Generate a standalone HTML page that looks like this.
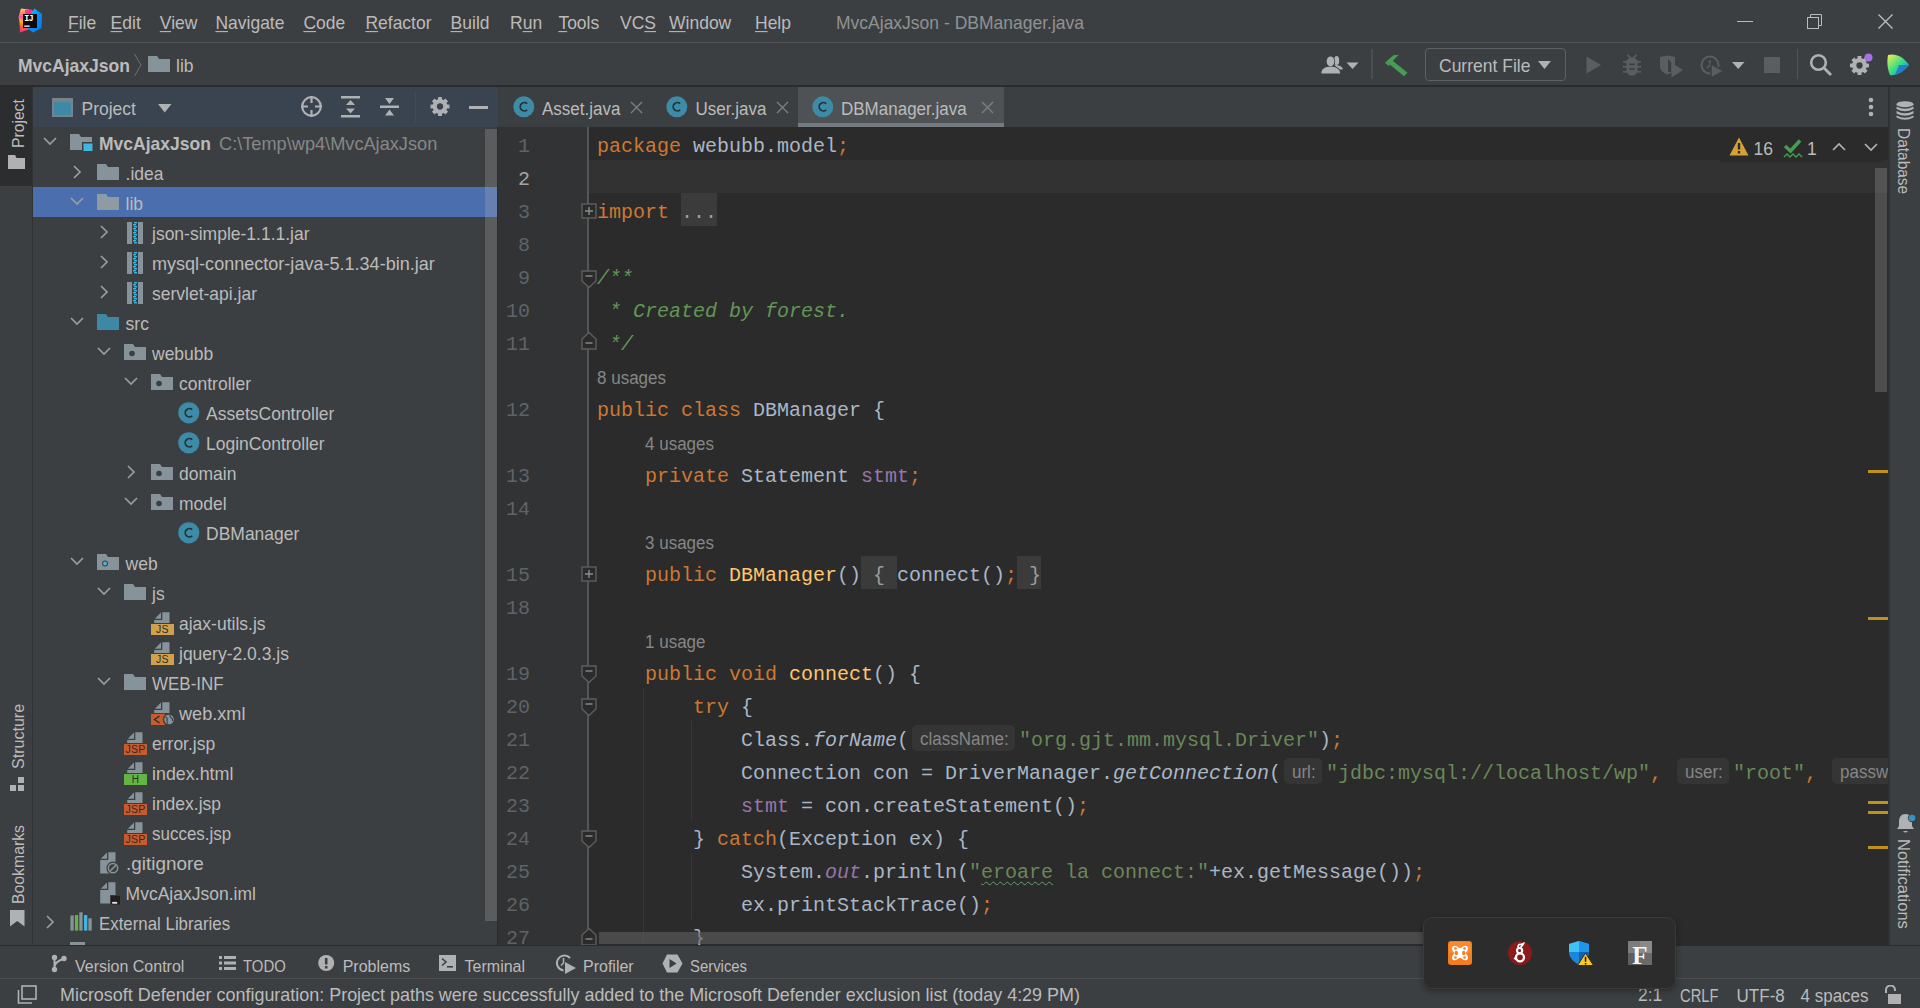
<!DOCTYPE html>
<html><head><meta charset="utf-8"><title>IntelliJ</title>
<style>
html,body{margin:0;padding:0;width:1920px;height:1008px;overflow:hidden;background:#3C3F41;}
div,svg{position:absolute;}
.t{white-space:pre;}
u{text-decoration:underline;text-underline-offset:2px;text-decoration-thickness:1px;}
</style></head><body>
<div style="left:0px;top:0px;width:1920px;height:1008px;background:#3C3F41;"></div>
<div style="left:0px;top:42px;width:1920px;height:1px;background:#505355;"></div>
<div style="left:0px;top:85px;width:1920px;height:2px;background:#2B2B2B;"></div>
<svg style="left:16px;top:8px;" width="28" height="27" viewBox="0 0 28 27">
<defs><linearGradient id="lgL" x1="0" y1="0" x2="0" y2="1"><stop offset="0" stop-color="#FCD33A"/><stop offset="0.35" stop-color="#FF4FB0"/><stop offset="0.55" stop-color="#FFB800"/><stop offset="0.75" stop-color="#FF5A36"/><stop offset="1" stop-color="#FF2E8E"/></linearGradient>
<linearGradient id="lgR" x1="0" y1="0" x2="1" y2="1"><stop offset="0" stop-color="#00D8FF"/><stop offset="0.5" stop-color="#0A8CF5"/><stop offset="1" stop-color="#087CFA"/></linearGradient></defs>
<polygon points="2.5,9 5,0.5 13,1.5 14,21 4,24.5 3.5,14" fill="url(#lgL)"/>
<polygon points="9,2 16,1.5 18,6 9,6" fill="#FF318C"/>
<polygon points="16,4 18.5,0.5 26,6 25.5,20 17,24.5 11,20" fill="url(#lgR)"/>
<rect x="7" y="6" width="14" height="14" fill="#0C0A0A"/>
<text x="8.2" y="13.3" font-family="Liberation Mono" font-weight="700" font-size="8.5" fill="#fff" letter-spacing="-0.8">IJ</text>
<rect x="8.2" y="17.5" width="5.5" height="1.3" fill="#fff"/>
</svg>
<div class="t" style="left:68px;top:15.39px;font-size:17.5px;line-height:17.5px;height:17.5px;color:#BBBBBB;font-family:'Liberation Sans', sans-serif;transform:scale(1.0,1.06);transform-origin:0 14.81px;"><u>F</u>ile</div>
<div class="t" style="left:110.6px;top:15.39px;font-size:17.5px;line-height:17.5px;height:17.5px;color:#BBBBBB;font-family:'Liberation Sans', sans-serif;transform:scale(1.0,1.06);transform-origin:0 14.81px;"><u>E</u>dit</div>
<div class="t" style="left:159.8px;top:15.39px;font-size:17.5px;line-height:17.5px;height:17.5px;color:#BBBBBB;font-family:'Liberation Sans', sans-serif;transform:scale(1.0,1.06);transform-origin:0 14.81px;"><u>V</u>iew</div>
<div class="t" style="left:215.4px;top:15.39px;font-size:17.5px;line-height:17.5px;height:17.5px;color:#BBBBBB;font-family:'Liberation Sans', sans-serif;transform:scale(1.0,1.06);transform-origin:0 14.81px;"><u>N</u>avigate</div>
<div class="t" style="left:303.4px;top:15.39px;font-size:17.5px;line-height:17.5px;height:17.5px;color:#BBBBBB;font-family:'Liberation Sans', sans-serif;transform:scale(1.0,1.06);transform-origin:0 14.81px;"><u>C</u>ode</div>
<div class="t" style="left:365.4px;top:15.39px;font-size:17.5px;line-height:17.5px;height:17.5px;color:#BBBBBB;font-family:'Liberation Sans', sans-serif;transform:scale(1.0,1.06);transform-origin:0 14.81px;"><u>R</u>efactor</div>
<div class="t" style="left:450.6px;top:15.39px;font-size:17.5px;line-height:17.5px;height:17.5px;color:#BBBBBB;font-family:'Liberation Sans', sans-serif;transform:scale(1.0,1.06);transform-origin:0 14.81px;"><u>B</u>uild</div>
<div class="t" style="left:510px;top:15.39px;font-size:17.5px;line-height:17.5px;height:17.5px;color:#BBBBBB;font-family:'Liberation Sans', sans-serif;transform:scale(1.0,1.06);transform-origin:0 14.81px;">R<u>u</u>n</div>
<div class="t" style="left:558.4px;top:15.39px;font-size:17.5px;line-height:17.5px;height:17.5px;color:#BBBBBB;font-family:'Liberation Sans', sans-serif;transform:scale(1.0,1.06);transform-origin:0 14.81px;"><u>T</u>ools</div>
<div class="t" style="left:620px;top:15.39px;font-size:17.5px;line-height:17.5px;height:17.5px;color:#BBBBBB;font-family:'Liberation Sans', sans-serif;transform:scale(1.0,1.06);transform-origin:0 14.81px;">VC<u>S</u></div>
<div class="t" style="left:669px;top:15.39px;font-size:17.5px;line-height:17.5px;height:17.5px;color:#BBBBBB;font-family:'Liberation Sans', sans-serif;transform:scale(1.0,1.06);transform-origin:0 14.81px;"><u>W</u>indow</div>
<div class="t" style="left:755px;top:15.39px;font-size:17.5px;line-height:17.5px;height:17.5px;color:#BBBBBB;font-family:'Liberation Sans', sans-serif;transform:scale(1.0,1.06);transform-origin:0 14.81px;"><u>H</u>elp</div>
<div class="t" style="left:836px;top:15.39px;font-size:17.5px;line-height:17.5px;height:17.5px;color:#8F9293;font-family:'Liberation Sans', sans-serif;transform:scale(1.0,1.06);transform-origin:0 14.81px;">MvcAjaxJson - DBManager.java</div>
<div style="left:1737px;top:21px;width:16px;height:1px;background:#BBBBBB;"></div>
<svg style="left:1806px;top:13px;" width="18" height="16" viewBox="0 0 18 16"><rect x="1.5" y="4.5" width="11" height="11" fill="none" stroke="#BBBBBB"/><path d="M4.5 4.5 V1.5 H15.5 V12.5 H12.5" fill="none" stroke="#BBBBBB"/></svg>
<svg style="left:1877px;top:13px;" width="17" height="17" viewBox="0 0 17 17"><path d="M1.5 1.5 L15.5 15.5 M15.5 1.5 L1.5 15.5" stroke="#BBBBBB" stroke-width="1.4"/></svg>
<div class="t" style="left:18px;top:58.09px;font-size:17.5px;line-height:17.5px;height:17.5px;color:#BBBBBB;font-family:'Liberation Sans', sans-serif;transform:scale(1.0,1.06);transform-origin:0 14.81px;font-weight:700;">MvcAjaxJson</div>
<svg style="left:133px;top:53px;" width="10" height="24" viewBox="0 0 10 24"><path d="M1.5 1 L8 12 L1.5 23" fill="none" stroke="#6E7173" stroke-width="1"/></svg>
<svg style="left:148px;top:56px;" width="23" height="17" viewBox="0 0 23 17"><path d="M0 0 H9.2 L11.0 3 H22 V16 H0 Z" fill="#87939A" transform="translate(0,0)"/></svg>
<div class="t" style="left:176px;top:58.09px;font-size:17.5px;line-height:17.5px;height:17.5px;color:#BBBBBB;font-family:'Liberation Sans', sans-serif;transform:scale(1.0,1.06);transform-origin:0 14.81px;">lib</div>
<svg style="left:1320px;top:55px;" width="24" height="20" viewBox="0 0 24 20"><ellipse cx="16.6" cy="5.5" rx="2.6" ry="4.6" fill="#AFB1B3"/><path d="M14 9.5 C19.5 10.5 22.5 11.5 22.8 14.2 L19 14.8 Z" fill="#AFB1B3"/><ellipse cx="10.5" cy="6.5" rx="4.6" ry="5.6" fill="#3C3F41"/><path d="M0.3 19 C0.5 13 4 11 10.5 11 C17 11 20.5 13 21.3 19 Z" fill="#3C3F41"/><ellipse cx="10.5" cy="6.4" rx="3.8" ry="5" fill="#AFB1B3"/><path d="M1.3 18.5 C1.5 13.5 5 11.8 10.5 11.8 C16 11.8 19.5 13.5 20.3 18.5 Z" fill="#AFB1B3"/></svg>
<svg style="left:1346px;top:62px;" width="14" height="8" viewBox="0 0 14 8"><path d="M0.5 0.5 H12.5 L6.5 7 Z" fill="#AFB1B3"/></svg>
<div style="left:1371px;top:49px;width:2px;height:30px;background:#4B4E50;"></div>
<svg style="left:1384px;top:53px;" width="25" height="24" viewBox="0 0 25 24"><path d="M1 9.7 L9.3 2.2 L14.8 1.8 L10.8 5.8 L8.5 8.2 L4.6 13 Z" fill="#499C54"/><path d="M7.5 6.8 L23.5 19.8 L20 23.2 L4.5 10.5 Z" fill="#499C54"/></svg>
<div style="left:1425px;top:48px;width:139px;height:31px;border:1px solid #5E6163;border-radius:4px;"></div>
<div class="t" style="left:1439px;top:58.29px;font-size:17.5px;line-height:17.5px;height:17.5px;color:#BBBBBB;font-family:'Liberation Sans', sans-serif;transform:scale(1.0,1.06);transform-origin:0 14.81px;">Current File</div>
<svg style="left:1538px;top:61px;" width="14" height="8" viewBox="0 0 14 8"><path d="M0 0 H13 L6.5 8 Z" fill="#AFB1B3"/></svg>
<svg style="left:1586px;top:56px;" width="16" height="18" viewBox="0 0 16 18"><path d="M0.5 0.5 L15 9 L0.5 17.5 Z" fill="#5B5E60"/></svg>
<svg style="left:1622px;top:54px;" width="21" height="23" viewBox="0 0 21 23"><g fill="#5B5E60"><path d="M5.5 1 L9.8 4.8 M14.5 1 L10.2 4.8" stroke="#5B5E60" stroke-width="1.8"/><path d="M4.5 8 C4.5 5 7 4 10 4 C13 4 15.5 5 15.5 8 V16 C15.5 19.5 13 21.7 10 21.7 C7 21.7 4.5 19.5 4.5 16 Z"/><rect x="1" y="7.1" width="18" height="1.6"/><rect x="1" y="12" width="18" height="1.6"/><rect x="1" y="17" width="18" height="1.6"/></g><rect x="7.3" y="9.6" width="5.4" height="1.5" fill="#3C3F41"/><rect x="7.3" y="14.2" width="5.4" height="1.5" fill="#3C3F41"/></svg>
<svg style="left:1659px;top:55px;" width="25" height="23" viewBox="0 0 25 23"><path d="M1 2 L8.5 0.5 L16 2 V11 C16 15.5 12.5 18 8.5 19.5 C4.5 18 1 15.5 1 11 Z" fill="#5B5E60"/><path d="M9 4 H12.5 V17 H9 Z" fill="#3C3F41"/><path d="M9 4 H16 V7.5 H12.5 Z" fill="#5B5E60"/><path d="M12.5 8 L24 15 L12.5 22.5 Z" fill="#5B5E60"/></svg>
<svg style="left:1700px;top:55px;" width="25" height="23" viewBox="0 0 25 23"><circle cx="10" cy="10" r="8.5" fill="none" stroke="#5B5E60" stroke-width="2"/><path d="M10 5 V10 L7 13" stroke="#5B5E60" stroke-width="1.6" fill="none"/><path d="M11 9 L24 16 L11 23 Z" fill="#5B5E60" stroke="#3C3F41" stroke-width="1.5"/></svg>
<svg style="left:1732px;top:62px;" width="13" height="7" viewBox="0 0 13 7"><path d="M0 0 H12.5 L6.25 7 Z" fill="#AFB1B3"/></svg>
<div style="left:1764px;top:57px;width:16px;height:16px;background:#5B5E60;"></div>
<div style="left:1797px;top:49px;width:1px;height:30px;background:#515456;"></div>
<svg style="left:1809px;top:53px;" width="25" height="24" viewBox="0 0 25 24"><circle cx="9.5" cy="9.5" r="7.3" fill="none" stroke="#AFB1B3" stroke-width="2.6"/><path d="M14.5 14.5 L22 22" stroke="#AFB1B3" stroke-width="2.8"/></svg>
<svg style="left:1849px;top:53px;" width="26" height="24" viewBox="0 0 26 24"><circle cx="10.5" cy="12.5" r="7.41" fill="#AFB1B3"/><rect x="8.55" y="3.0" width="3.9000000000000004" height="9.5" fill="#AFB1B3" transform="rotate(0.0 10.5 12.5)"/><rect x="8.55" y="3.0" width="3.9000000000000004" height="9.5" fill="#AFB1B3" transform="rotate(45.0 10.5 12.5)"/><rect x="8.55" y="3.0" width="3.9000000000000004" height="9.5" fill="#AFB1B3" transform="rotate(90.0 10.5 12.5)"/><rect x="8.55" y="3.0" width="3.9000000000000004" height="9.5" fill="#AFB1B3" transform="rotate(135.0 10.5 12.5)"/><rect x="8.55" y="3.0" width="3.9000000000000004" height="9.5" fill="#AFB1B3" transform="rotate(180.0 10.5 12.5)"/><rect x="8.55" y="3.0" width="3.9000000000000004" height="9.5" fill="#AFB1B3" transform="rotate(225.0 10.5 12.5)"/><rect x="8.55" y="3.0" width="3.9000000000000004" height="9.5" fill="#AFB1B3" transform="rotate(270.0 10.5 12.5)"/><rect x="8.55" y="3.0" width="3.9000000000000004" height="9.5" fill="#AFB1B3" transform="rotate(315.0 10.5 12.5)"/><circle cx="10.5" cy="12.5" r="3.1350000000000002" fill="#3C3F41"/><circle cx="19.5" cy="4.5" r="4" fill="#A571E6"/></svg>
<svg style="left:1887px;top:53px;" width="24" height="24" viewBox="0 0 24 24"><defs><linearGradient id="ai1" x1="0" y1="0" x2="1" y2="1"><stop offset="0" stop-color="#F5F24A"/><stop offset="0.5" stop-color="#3DDC84"/><stop offset="1" stop-color="#087CFA"/></linearGradient></defs>
<path d="M1 2 C8 0 16 3 22 12 C16 20 8 23 3 22 C0 15 0 8 1 2 Z" fill="url(#ai1)"/><path d="M12 12 L22 12 C18 17 13 20 8 22 Z" fill="#1D6FD8" opacity="0.8"/></svg>
<div style="left:0px;top:87px;width:32px;height:858px;background:#3C3F41;"></div>
<div style="left:32px;top:87px;width:1px;height:858px;background:#323232;"></div>
<div style="left:0px;top:87px;width:32px;height:99px;background:#2B2D2F;"></div>
<div class="t" style="left:0;top:0;width:50px;height:16px;line-height:16px;font-size:16.5px;color:#BBBBBB;font-family:'Liberation Sans', sans-serif;transform:translate(10px,148px) rotate(-90deg) scaleX(0.95);transform-origin:0 0;">Project</div>
<svg style="left:8px;top:155px;" width="18" height="15" viewBox="0 0 18 15"><path d="M0 0 H7.1 L8.5 3 H17 V14 H0 Z" fill="#AFB1B3" transform="translate(0,0)"/></svg>
<div class="t" style="left:0;top:0;width:65px;height:16px;line-height:16px;font-size:16.5px;color:#BBBBBB;font-family:'Liberation Sans', sans-serif;transform:translate(10px,769px) rotate(-90deg) scaleX(0.972);transform-origin:0 0;">Structure</div>
<svg style="left:10px;top:777px;" width="15" height="14" viewBox="0 0 15 14"><rect x="0" y="8" width="6" height="6" fill="#AFB1B3"/><rect x="8" y="8" width="6" height="6" fill="#AFB1B3"/><rect x="8" y="0" width="6" height="6" fill="#AFB1B3"/></svg>
<div class="t" style="left:0;top:0;width:79px;height:16px;line-height:16px;font-size:16.5px;color:#BBBBBB;font-family:'Liberation Sans', sans-serif;transform:translate(10px,904px) rotate(-90deg) scaleX(0.957);transform-origin:0 0;">Bookmarks</div>
<svg style="left:10px;top:910px;" width="15" height="17" viewBox="0 0 15 17"><path d="M0 0 H14.5 V16.5 L7.25 11 L0 16.5 Z" fill="#AFB1B3"/></svg>
<div style="left:33px;top:87px;width:465px;height:40px;background:#3A4350;"></div>
<svg style="left:51px;top:97px;" width="24" height="22" viewBox="0 0 24 22"><rect x="1" y="1" width="21" height="19" fill="#7A8388"/><rect x="3" y="5" width="17" height="13" fill="#3E88A8"/></svg>
<div class="t" style="left:81.5px;top:100.89px;font-size:17.5px;line-height:17.5px;height:17.5px;color:#BBBBBB;font-family:'Liberation Sans', sans-serif;transform:scale(1.0,1.06);transform-origin:0 14.81px;">Project</div>
<svg style="left:158px;top:104px;" width="14" height="9" viewBox="0 0 14 9"><path d="M0 0 H13.5 L6.75 8.5 Z" fill="#AFB1B3"/></svg>
<svg style="left:300px;top:95px;" width="24" height="24" viewBox="0 0 24 24"><circle cx="11.5" cy="11.5" r="9.3" fill="none" stroke="#AFB1B3" stroke-width="2.2"/><path d="M11.5 1 V8 M11.5 15 V22 M1 11.5 H8 M15 11.5 H22" stroke="#AFB1B3" stroke-width="2.2"/></svg>
<svg style="left:341px;top:96px;" width="20" height="22" viewBox="0 0 20 22"><rect x="0" y="0" width="19" height="2.5" fill="#AFB1B3"/><rect x="0" y="19" width="19" height="2.5" fill="#AFB1B3"/><path d="M9.5 4 L14 9 H5 Z M9.5 17.5 L14 12.5 H5 Z" fill="#AFB1B3"/></svg>
<svg style="left:380px;top:96px;" width="20" height="22" viewBox="0 0 20 22"><rect x="0" y="9.5" width="19" height="2.5" fill="#AFB1B3"/><path d="M9.5 8 L14 2 H5 Z M9.5 13.5 L14 19.5 H5 Z" fill="#AFB1B3"/></svg>
<div style="left:415px;top:91px;width:1px;height:31px;background:#4F4A3F;"></div>
<svg style="left:430px;top:96px;" width="21" height="22" viewBox="0 0 21 22"><circle cx="10" cy="10.5" r="7.41" fill="#AFB1B3"/><rect x="8.05" y="1.0" width="3.9000000000000004" height="9.5" fill="#AFB1B3" transform="rotate(0.0 10 10.5)"/><rect x="8.05" y="1.0" width="3.9000000000000004" height="9.5" fill="#AFB1B3" transform="rotate(45.0 10 10.5)"/><rect x="8.05" y="1.0" width="3.9000000000000004" height="9.5" fill="#AFB1B3" transform="rotate(90.0 10 10.5)"/><rect x="8.05" y="1.0" width="3.9000000000000004" height="9.5" fill="#AFB1B3" transform="rotate(135.0 10 10.5)"/><rect x="8.05" y="1.0" width="3.9000000000000004" height="9.5" fill="#AFB1B3" transform="rotate(180.0 10 10.5)"/><rect x="8.05" y="1.0" width="3.9000000000000004" height="9.5" fill="#AFB1B3" transform="rotate(225.0 10 10.5)"/><rect x="8.05" y="1.0" width="3.9000000000000004" height="9.5" fill="#AFB1B3" transform="rotate(270.0 10 10.5)"/><rect x="8.05" y="1.0" width="3.9000000000000004" height="9.5" fill="#AFB1B3" transform="rotate(315.0 10 10.5)"/><circle cx="10" cy="10.5" r="3.1350000000000002" fill="#3A4350"/></svg>
<div style="left:469px;top:106px;width:19px;height:2.5px;background:#AFB1B3;"></div>
<div style="left:33px;top:127px;width:465px;height:818px;overflow:hidden;">
<div style="left:0px;top:60px;width:465px;height:30px;background:#4B6EAF;"></div>
<svg style="left:10px;top:9px;" width="14" height="10" viewBox="0 0 14 10"><path d="M1 2 L7 8 L13 2" fill="none" stroke="#9A9DA0" stroke-width="1.7"/></svg>
<svg style="left:37px;top:7px;" width="23" height="17" viewBox="0 0 23 17"><path d="M0 0 H9 L11 3 H22 V16 H0 Z" fill="#87939A"/><rect x="12" y="8" width="11" height="9" fill="#3C3F41"/><rect x="13.5" y="9.5" width="9" height="8" fill="#40B6E0"/></svg>
<div class="t" style="left:66px;top:9.19px;font-size:17.5px;line-height:17.5px;height:17.5px;color:#BBBBBB;font-family:'Liberation Sans', sans-serif;transform:scale(1.0,1.06);transform-origin:0 14.81px;font-weight:700;">MvcAjaxJson</div>
<svg style="left:39px;top:38px;" width="10" height="14" viewBox="0 0 10 14"><path d="M2 1 L8 7 L2 13" fill="none" stroke="#9A9DA0" stroke-width="1.7"/></svg>
<svg style="left:64px;top:37px;" width="22" height="17" viewBox="0 0 22 17"><path d="M0 0 H9 L11 3 H22 V16 H0 Z" fill="#87939A"/></svg>
<div class="t" style="left:92.6px;top:39.19px;font-size:17.5px;line-height:17.5px;height:17.5px;color:#BBBBBB;font-family:'Liberation Sans', sans-serif;transform:scale(1.0,1.06);transform-origin:0 14.81px;">.idea</div>
<svg style="left:37px;top:69px;" width="14" height="10" viewBox="0 0 14 10"><path d="M1 2 L7 8 L13 2" fill="none" stroke="#9A9DA0" stroke-width="1.7"/></svg>
<svg style="left:64px;top:67px;" width="22" height="17" viewBox="0 0 22 17"><path d="M0 0 H9 L11 3 H22 V16 H0 Z" fill="#8F9BA2"/></svg>
<div class="t" style="left:92.6px;top:69.19px;font-size:17.5px;line-height:17.5px;height:17.5px;color:#BBBBBB;font-family:'Liberation Sans', sans-serif;transform:scale(1.0,1.06);transform-origin:0 14.81px;">lib</div>
<svg style="left:66px;top:98px;" width="10" height="14" viewBox="0 0 10 14"><path d="M2 1 L8 7 L2 13" fill="none" stroke="#9A9DA0" stroke-width="1.7"/></svg>
<svg style="left:94px;top:95px;" width="16" height="22" viewBox="0 0 16 22"><rect x="0" y="0" width="16" height="22" fill="#87939A"/><rect x="5" y="0" width="6" height="22" fill="#3C3F41"/><rect x="7" y="0" width="3" height="1.4" fill="#40B6E0"/><rect x="6" y="2" width="3" height="1.4" fill="#40B6E0"/><rect x="7" y="4" width="3" height="1.4" fill="#40B6E0"/><rect x="6" y="6" width="3" height="1.4" fill="#40B6E0"/><rect x="7" y="8" width="3" height="1.4" fill="#40B6E0"/><rect x="6" y="10" width="3" height="1.4" fill="#40B6E0"/><rect x="7" y="12" width="3" height="1.4" fill="#40B6E0"/><rect x="6" y="14" width="3" height="1.4" fill="#40B6E0"/><rect x="7" y="16" width="3" height="1.4" fill="#40B6E0"/><rect x="6" y="18" width="3" height="1.4" fill="#40B6E0"/><rect x="7" y="20" width="3" height="1.4" fill="#40B6E0"/></svg>
<div class="t" style="left:119px;top:99.19px;font-size:17.5px;line-height:17.5px;height:17.5px;color:#BBBBBB;font-family:'Liberation Sans', sans-serif;transform:scale(1.0,1.06);transform-origin:0 14.81px;">json-simple-1.1.1.jar</div>
<svg style="left:66px;top:128px;" width="10" height="14" viewBox="0 0 10 14"><path d="M2 1 L8 7 L2 13" fill="none" stroke="#9A9DA0" stroke-width="1.7"/></svg>
<svg style="left:94px;top:125px;" width="16" height="22" viewBox="0 0 16 22"><rect x="0" y="0" width="16" height="22" fill="#87939A"/><rect x="5" y="0" width="6" height="22" fill="#3C3F41"/><rect x="7" y="0" width="3" height="1.4" fill="#40B6E0"/><rect x="6" y="2" width="3" height="1.4" fill="#40B6E0"/><rect x="7" y="4" width="3" height="1.4" fill="#40B6E0"/><rect x="6" y="6" width="3" height="1.4" fill="#40B6E0"/><rect x="7" y="8" width="3" height="1.4" fill="#40B6E0"/><rect x="6" y="10" width="3" height="1.4" fill="#40B6E0"/><rect x="7" y="12" width="3" height="1.4" fill="#40B6E0"/><rect x="6" y="14" width="3" height="1.4" fill="#40B6E0"/><rect x="7" y="16" width="3" height="1.4" fill="#40B6E0"/><rect x="6" y="18" width="3" height="1.4" fill="#40B6E0"/><rect x="7" y="20" width="3" height="1.4" fill="#40B6E0"/></svg>
<div class="t" style="left:119px;top:129.19px;font-size:17.5px;line-height:17.5px;height:17.5px;color:#BBBBBB;font-family:'Liberation Sans', sans-serif;transform:scale(1.031,1.06);transform-origin:0 14.81px;">mysql-connector-java-5.1.34-bin.jar</div>
<svg style="left:66px;top:158px;" width="10" height="14" viewBox="0 0 10 14"><path d="M2 1 L8 7 L2 13" fill="none" stroke="#9A9DA0" stroke-width="1.7"/></svg>
<svg style="left:94px;top:155px;" width="16" height="22" viewBox="0 0 16 22"><rect x="0" y="0" width="16" height="22" fill="#87939A"/><rect x="5" y="0" width="6" height="22" fill="#3C3F41"/><rect x="7" y="0" width="3" height="1.4" fill="#40B6E0"/><rect x="6" y="2" width="3" height="1.4" fill="#40B6E0"/><rect x="7" y="4" width="3" height="1.4" fill="#40B6E0"/><rect x="6" y="6" width="3" height="1.4" fill="#40B6E0"/><rect x="7" y="8" width="3" height="1.4" fill="#40B6E0"/><rect x="6" y="10" width="3" height="1.4" fill="#40B6E0"/><rect x="7" y="12" width="3" height="1.4" fill="#40B6E0"/><rect x="6" y="14" width="3" height="1.4" fill="#40B6E0"/><rect x="7" y="16" width="3" height="1.4" fill="#40B6E0"/><rect x="6" y="18" width="3" height="1.4" fill="#40B6E0"/><rect x="7" y="20" width="3" height="1.4" fill="#40B6E0"/></svg>
<div class="t" style="left:119px;top:159.19px;font-size:17.5px;line-height:17.5px;height:17.5px;color:#BBBBBB;font-family:'Liberation Sans', sans-serif;transform:scale(1.0,1.06);transform-origin:0 14.81px;">servlet-api.jar</div>
<svg style="left:37px;top:189px;" width="14" height="10" viewBox="0 0 14 10"><path d="M1 2 L7 8 L13 2" fill="none" stroke="#9A9DA0" stroke-width="1.7"/></svg>
<svg style="left:64px;top:187px;" width="22" height="17" viewBox="0 0 22 17"><path d="M0 0 H9 L11 3 H22 V16 H0 Z" fill="#3D88A5"/></svg>
<div class="t" style="left:92.6px;top:189.19px;font-size:17.5px;line-height:17.5px;height:17.5px;color:#BBBBBB;font-family:'Liberation Sans', sans-serif;transform:scale(1.0,1.06);transform-origin:0 14.81px;">src</div>
<svg style="left:64px;top:219px;" width="14" height="10" viewBox="0 0 14 10"><path d="M1 2 L7 8 L13 2" fill="none" stroke="#9A9DA0" stroke-width="1.7"/></svg>
<svg style="left:91px;top:217px;" width="22" height="17" viewBox="0 0 22 17"><path d="M0 0 H9 L11 3 H22 V16 H0 Z" fill="#87939A"/><circle cx="8" cy="9.5" r="2.8" fill="#3C3F41"/></svg>
<div class="t" style="left:119px;top:219.19px;font-size:17.5px;line-height:17.5px;height:17.5px;color:#BBBBBB;font-family:'Liberation Sans', sans-serif;transform:scale(1.0,1.06);transform-origin:0 14.81px;">webubb</div>
<svg style="left:91px;top:249px;" width="14" height="10" viewBox="0 0 14 10"><path d="M1 2 L7 8 L13 2" fill="none" stroke="#9A9DA0" stroke-width="1.7"/></svg>
<svg style="left:118px;top:247px;" width="22" height="17" viewBox="0 0 22 17"><path d="M0 0 H9 L11 3 H22 V16 H0 Z" fill="#87939A"/><circle cx="8" cy="9.5" r="2.8" fill="#3C3F41"/></svg>
<div class="t" style="left:146px;top:249.19px;font-size:17.5px;line-height:17.5px;height:17.5px;color:#BBBBBB;font-family:'Liberation Sans', sans-serif;transform:scale(1.0,1.06);transform-origin:0 14.81px;">controller</div>
<svg style="left:145px;top:275px;" width="22" height="22" viewBox="0 0 22 22"><circle cx="10.8" cy="10.8" r="10.6" fill="#3D8BA6"/><path d="M14.2 7.6 A4.2 4.2 0 1 0 14.2 13.9" fill="none" stroke="#233238" stroke-width="1.7"/></svg>
<div class="t" style="left:173px;top:279.19px;font-size:17.5px;line-height:17.5px;height:17.5px;color:#BBBBBB;font-family:'Liberation Sans', sans-serif;transform:scale(1.0,1.06);transform-origin:0 14.81px;">AssetsController</div>
<svg style="left:145px;top:305px;" width="22" height="22" viewBox="0 0 22 22"><circle cx="10.8" cy="10.8" r="10.6" fill="#3D8BA6"/><path d="M14.2 7.6 A4.2 4.2 0 1 0 14.2 13.9" fill="none" stroke="#233238" stroke-width="1.7"/></svg>
<div class="t" style="left:173px;top:309.19px;font-size:17.5px;line-height:17.5px;height:17.5px;color:#BBBBBB;font-family:'Liberation Sans', sans-serif;transform:scale(1.0,1.06);transform-origin:0 14.81px;">LoginController</div>
<svg style="left:93px;top:338px;" width="10" height="14" viewBox="0 0 10 14"><path d="M2 1 L8 7 L2 13" fill="none" stroke="#9A9DA0" stroke-width="1.7"/></svg>
<svg style="left:118px;top:337px;" width="22" height="17" viewBox="0 0 22 17"><path d="M0 0 H9 L11 3 H22 V16 H0 Z" fill="#87939A"/><circle cx="8" cy="9.5" r="2.8" fill="#3C3F41"/></svg>
<div class="t" style="left:146px;top:339.19px;font-size:17.5px;line-height:17.5px;height:17.5px;color:#BBBBBB;font-family:'Liberation Sans', sans-serif;transform:scale(1.0,1.06);transform-origin:0 14.81px;">domain</div>
<svg style="left:91px;top:369px;" width="14" height="10" viewBox="0 0 14 10"><path d="M1 2 L7 8 L13 2" fill="none" stroke="#9A9DA0" stroke-width="1.7"/></svg>
<svg style="left:118px;top:367px;" width="22" height="17" viewBox="0 0 22 17"><path d="M0 0 H9 L11 3 H22 V16 H0 Z" fill="#87939A"/><circle cx="8" cy="9.5" r="2.8" fill="#3C3F41"/></svg>
<div class="t" style="left:146px;top:369.19px;font-size:17.5px;line-height:17.5px;height:17.5px;color:#BBBBBB;font-family:'Liberation Sans', sans-serif;transform:scale(1.0,1.06);transform-origin:0 14.81px;">model</div>
<svg style="left:145px;top:395px;" width="22" height="22" viewBox="0 0 22 22"><circle cx="10.8" cy="10.8" r="10.6" fill="#3D8BA6"/><path d="M14.2 7.6 A4.2 4.2 0 1 0 14.2 13.9" fill="none" stroke="#233238" stroke-width="1.7"/></svg>
<div class="t" style="left:173px;top:399.19px;font-size:17.5px;line-height:17.5px;height:17.5px;color:#BBBBBB;font-family:'Liberation Sans', sans-serif;transform:scale(1.0,1.06);transform-origin:0 14.81px;">DBManager</div>
<svg style="left:37px;top:429px;" width="14" height="10" viewBox="0 0 14 10"><path d="M1 2 L7 8 L13 2" fill="none" stroke="#9A9DA0" stroke-width="1.7"/></svg>
<svg style="left:64px;top:427px;" width="22" height="17" viewBox="0 0 22 17"><path d="M0 0 H9 L11 3 H22 V16 H0 Z" fill="#87939A"/><circle cx="8" cy="9.5" r="3" fill="#3C3F41"/><circle cx="8" cy="9.5" r="2" fill="#40B6E0"/></svg>
<div class="t" style="left:92.6px;top:429.19px;font-size:17.5px;line-height:17.5px;height:17.5px;color:#BBBBBB;font-family:'Liberation Sans', sans-serif;transform:scale(1.0,1.06);transform-origin:0 14.81px;">web</div>
<svg style="left:64px;top:459px;" width="14" height="10" viewBox="0 0 14 10"><path d="M1 2 L7 8 L13 2" fill="none" stroke="#9A9DA0" stroke-width="1.7"/></svg>
<svg style="left:91px;top:457px;" width="22" height="17" viewBox="0 0 22 17"><path d="M0 0 H9 L11 3 H22 V16 H0 Z" fill="#87939A"/></svg>
<div class="t" style="left:119px;top:459.19px;font-size:17.5px;line-height:17.5px;height:17.5px;color:#BBBBBB;font-family:'Liberation Sans', sans-serif;transform:scale(1.0,1.06);transform-origin:0 14.81px;">js</div>
<svg style="left:118px;top:480px;" width="24" height="30" viewBox="0 0 24 30"><path d="M11.3 5.3 H18.5 V15.9 H3.2 V12.9 H11.3 Z" fill="#87939A"/><path d="M3.8 11.7 L10 5.5 V11.7 Z" fill="#87939A"/><rect x="0" y="17" width="23" height="11" fill="#D0A04C"/><text x="11.5" y="26.3" text-anchor="middle" font-family="Liberation Sans" font-size="10.5" fill="#2B2B2B" letter-spacing="0.3">JS</text></svg>
<div class="t" style="left:146px;top:489.19px;font-size:17.5px;line-height:17.5px;height:17.5px;color:#BBBBBB;font-family:'Liberation Sans', sans-serif;transform:scale(1.0,1.06);transform-origin:0 14.81px;">ajax-utils.js</div>
<svg style="left:118px;top:510px;" width="24" height="30" viewBox="0 0 24 30"><path d="M11.3 5.3 H18.5 V15.9 H3.2 V12.9 H11.3 Z" fill="#87939A"/><path d="M3.8 11.7 L10 5.5 V11.7 Z" fill="#87939A"/><rect x="0" y="17" width="23" height="11" fill="#D0A04C"/><text x="11.5" y="26.3" text-anchor="middle" font-family="Liberation Sans" font-size="10.5" fill="#2B2B2B" letter-spacing="0.3">JS</text></svg>
<div class="t" style="left:146px;top:519.19px;font-size:17.5px;line-height:17.5px;height:17.5px;color:#BBBBBB;font-family:'Liberation Sans', sans-serif;transform:scale(1.0,1.06);transform-origin:0 14.81px;">jquery-2.0.3.js</div>
<svg style="left:64px;top:549px;" width="14" height="10" viewBox="0 0 14 10"><path d="M1 2 L7 8 L13 2" fill="none" stroke="#9A9DA0" stroke-width="1.7"/></svg>
<svg style="left:91px;top:547px;" width="22" height="17" viewBox="0 0 22 17"><path d="M0 0 H9 L11 3 H22 V16 H0 Z" fill="#87939A"/></svg>
<div class="t" style="left:119px;top:549.19px;font-size:17.5px;line-height:17.5px;height:17.5px;color:#BBBBBB;font-family:'Liberation Sans', sans-serif;transform:scale(0.97,1.06);transform-origin:0 14.81px;">WEB-INF</div>
<svg style="left:118px;top:570px;" width="25" height="30" viewBox="0 0 25 30"><path d="M11.3 5.3 H18.5 V15.9 H3.2 V12.9 H11.3 Z" fill="#87939A"/><path d="M3.8 11.7 L10 5.5 V11.7 Z" fill="#87939A"/><rect x="0" y="17" width="14" height="11" fill="#C75B2E"/><path d="M8.5 19 L3.5 22.5 L8.5 26" fill="none" stroke="#2B2B2B" stroke-width="1.3"/><circle cx="18" cy="22.5" r="6.2" fill="#3C3F41"/><circle cx="18" cy="22.5" r="4.8" fill="#87939A"/><path d="M14.5 20 Q17 21 16 23.5 Q15.5 25 17 26.5 M19 18 Q18.5 20 20.5 21 Q22 22 21.5 24" fill="none" stroke="#3C3F41" stroke-width="1.1"/></svg>
<div class="t" style="left:146px;top:579.19px;font-size:17.5px;line-height:17.5px;height:17.5px;color:#BBBBBB;font-family:'Liberation Sans', sans-serif;transform:scale(1.035,1.06);transform-origin:0 14.81px;">web.xml</div>
<svg style="left:91px;top:600px;" width="24" height="30" viewBox="0 0 24 30"><path d="M11.3 5.3 H18.5 V15.9 H3.2 V12.9 H11.3 Z" fill="#87939A"/><path d="M3.8 11.7 L10 5.5 V11.7 Z" fill="#87939A"/><rect x="0" y="17" width="23" height="11" fill="#C75B2E"/><text x="11.5" y="26.3" text-anchor="middle" font-family="Liberation Sans" font-size="10.5" fill="#2B2B2B" letter-spacing="0.3">JSP</text></svg>
<div class="t" style="left:119px;top:609.19px;font-size:17.5px;line-height:17.5px;height:17.5px;color:#BBBBBB;font-family:'Liberation Sans', sans-serif;transform:scale(1.0,1.06);transform-origin:0 14.81px;">error.jsp</div>
<svg style="left:91px;top:630px;" width="24" height="30" viewBox="0 0 24 30"><path d="M11.3 5.3 H18.5 V15.9 H3.2 V12.9 H11.3 Z" fill="#87939A"/><path d="M3.8 11.7 L10 5.5 V11.7 Z" fill="#87939A"/><rect x="0" y="17" width="23" height="11" fill="#62B543"/><text x="11.5" y="26.3" text-anchor="middle" font-family="Liberation Sans" font-size="10" fill="#2B2B2B" letter-spacing="0.3">H</text></svg>
<div class="t" style="left:119px;top:639.19px;font-size:17.5px;line-height:17.5px;height:17.5px;color:#BBBBBB;font-family:'Liberation Sans', sans-serif;transform:scale(1.02,1.06);transform-origin:0 14.81px;">index.html</div>
<svg style="left:91px;top:660px;" width="24" height="30" viewBox="0 0 24 30"><path d="M11.3 5.3 H18.5 V15.9 H3.2 V12.9 H11.3 Z" fill="#87939A"/><path d="M3.8 11.7 L10 5.5 V11.7 Z" fill="#87939A"/><rect x="0" y="17" width="23" height="11" fill="#C75B2E"/><text x="11.5" y="26.3" text-anchor="middle" font-family="Liberation Sans" font-size="10.5" fill="#2B2B2B" letter-spacing="0.3">JSP</text></svg>
<div class="t" style="left:119px;top:669.19px;font-size:17.5px;line-height:17.5px;height:17.5px;color:#BBBBBB;font-family:'Liberation Sans', sans-serif;transform:scale(1.0,1.06);transform-origin:0 14.81px;">index.jsp</div>
<svg style="left:91px;top:690px;" width="24" height="30" viewBox="0 0 24 30"><path d="M11.3 5.3 H18.5 V15.9 H3.2 V12.9 H11.3 Z" fill="#87939A"/><path d="M3.8 11.7 L10 5.5 V11.7 Z" fill="#87939A"/><rect x="0" y="17" width="23" height="11" fill="#C75B2E"/><text x="11.5" y="26.3" text-anchor="middle" font-family="Liberation Sans" font-size="10.5" fill="#2B2B2B" letter-spacing="0.3">JSP</text></svg>
<div class="t" style="left:119px;top:699.19px;font-size:17.5px;line-height:17.5px;height:17.5px;color:#BBBBBB;font-family:'Liberation Sans', sans-serif;transform:scale(0.97,1.06);transform-origin:0 14.81px;">succes.jsp</div>
<svg style="left:64px;top:720px;" width="25" height="30" viewBox="0 0 25 30"><path d="M11.3 5.3 H18.5 V26.6 H3.2 V12.9 H11.3 Z" fill="#87939A"/><path d="M3.8 11.7 L10 5.5 V11.7 Z" fill="#87939A"/><circle cx="16" cy="21.1" r="6.6" fill="#3C3F41"/><circle cx="16" cy="21.1" r="4.7" fill="none" stroke="#87939A" stroke-width="1.5"/><path d="M13 24.1 L19 18.1" stroke="#87939A" stroke-width="1.5"/></svg>
<div class="t" style="left:92.6px;top:729.19px;font-size:17.5px;line-height:17.5px;height:17.5px;color:#BBBBBB;font-family:'Liberation Sans', sans-serif;transform:scale(1.08,1.06);transform-origin:0 14.81px;">.gitignore</div>
<svg style="left:64px;top:750px;" width="25" height="30" viewBox="0 0 25 30"><path d="M11.3 5.3 H18.5 V26.6 H3.2 V12.9 H11.3 Z" fill="#87939A"/><path d="M3.8 11.7 L10 5.5 V11.7 Z" fill="#87939A"/><rect x="13" y="18" width="11" height="10.5" fill="#3C3F41"/><rect x="14" y="18.9" width="9" height="8.6" fill="#231F20"/><rect x="15.2" y="24.9" width="5" height="1.8" fill="#E8E8E8"/></svg>
<div class="t" style="left:92.6px;top:759.19px;font-size:17.5px;line-height:17.5px;height:17.5px;color:#BBBBBB;font-family:'Liberation Sans', sans-serif;transform:scale(1.0,1.06);transform-origin:0 14.81px;">MvcAjaxJson.iml</div>
<svg style="left:12px;top:788px;" width="10" height="14" viewBox="0 0 10 14"><path d="M2 1 L8 7 L2 13" fill="none" stroke="#9A9DA0" stroke-width="1.7"/></svg>
<svg style="left:37px;top:780px;" width="23" height="26" viewBox="0 0 23 26"><rect x="0.4" y="8.5" width="3.3" height="15.1" fill="#87939A"/><rect x="4.9" y="8.1" width="3.3" height="15.5" fill="#62B543"/><rect x="9.3" y="5.3" width="3.3" height="18.3" fill="#87939A"/><rect x="14" y="8.1" width="3.3" height="15.5" fill="#40B6E0"/><rect x="18.4" y="11.3" width="3.3" height="12.3" fill="#87939A"/></svg>
<div class="t" style="left:66px;top:789.19px;font-size:17.5px;line-height:17.5px;height:17.5px;color:#BBBBBB;font-family:'Liberation Sans', sans-serif;transform:scale(0.963,1.06);transform-origin:0 14.81px;">External Libraries</div>
<div class="t" style="left:186px;top:9.19px;font-size:17.5px;line-height:17.5px;height:17.5px;color:#878787;font-family:'Liberation Sans', sans-serif;transform:scale(1.039,1.06);transform-origin:0 14.81px;">C:\Temp\wp4\MvcAjaxJson</div>
<div style="left:37.400000000000006px;top:815.3px;width:15px;height:3px;background:#87939A;"></div>
<div style="left:452px;top:2px;width:12px;height:792px;background:rgba(190,190,190,0.24);"></div>
</div>
<div style="left:497px;top:127px;width:1px;height:818px;background:#2B2B2B;"></div>
<div style="left:498px;top:87px;width:1390px;height:40px;background:#3C3F41;"></div>
<div style="left:798px;top:87px;width:206px;height:40px;background:#4E5254;"></div>
<div style="left:798px;top:123px;width:206px;height:4px;background:#747A80;"></div>
<svg style="left:513px;top:96px;" width="22" height="22" viewBox="0 0 22 22"><circle cx="10.8" cy="10.8" r="10.5" fill="#3D8BA6"/><path d="M14.2 7.6 A4.2 4.2 0 1 0 14.2 13.9" fill="none" stroke="#233238" stroke-width="1.7"/></svg>
<div class="t" style="left:542px;top:101.01px;font-size:17px;line-height:17px;height:17px;color:#BBBBBB;font-family:'Liberation Sans', sans-serif;transform:scale(1.0,1.06);transform-origin:0 14.39px;">Asset.java</div>
<svg style="left:630px;top:101px;" width="13" height="13" viewBox="0 0 13 13"><path d="M1 1 L12 12 M12 1 L1 12" stroke="#7C7F81" stroke-width="1.4"/></svg>
<svg style="left:666px;top:96px;" width="22" height="22" viewBox="0 0 22 22"><circle cx="10.8" cy="10.8" r="10.5" fill="#3D8BA6"/><path d="M14.2 7.6 A4.2 4.2 0 1 0 14.2 13.9" fill="none" stroke="#233238" stroke-width="1.7"/></svg>
<div class="t" style="left:695.5px;top:101.01px;font-size:17px;line-height:17px;height:17px;color:#BBBBBB;font-family:'Liberation Sans', sans-serif;transform:scale(1.0,1.06);transform-origin:0 14.39px;">User.java</div>
<svg style="left:776px;top:101px;" width="13" height="13" viewBox="0 0 13 13"><path d="M1 1 L12 12 M12 1 L1 12" stroke="#7C7F81" stroke-width="1.4"/></svg>
<svg style="left:811.5px;top:96px;" width="22" height="22" viewBox="0 0 22 22"><circle cx="10.8" cy="10.8" r="10.5" fill="#3D8BA6"/><path d="M14.2 7.6 A4.2 4.2 0 1 0 14.2 13.9" fill="none" stroke="#233238" stroke-width="1.7"/></svg>
<div class="t" style="left:841px;top:101.01px;font-size:17px;line-height:17px;height:17px;color:#BBBBBB;font-family:'Liberation Sans', sans-serif;transform:scale(1.0,1.06);transform-origin:0 14.39px;">DBManager.java</div>
<svg style="left:980.5px;top:101px;" width="13" height="13" viewBox="0 0 13 13"><path d="M1 1 L12 12 M12 1 L1 12" stroke="#7C7F81" stroke-width="1.4"/></svg>
<svg style="left:1866px;top:96px;" width="10" height="22" viewBox="0 0 10 22"><circle cx="5" cy="4" r="2.3" fill="#AFB1B3"/><circle cx="5" cy="11" r="2.3" fill="#AFB1B3"/><circle cx="5" cy="18" r="2.3" fill="#AFB1B3"/></svg>
<div style="left:498px;top:127px;width:1390px;height:818px;background:#2B2B2B;"></div>
<div style="left:498px;top:127px;width:91px;height:818px;background:#313335;"></div>
<div style="left:589px;top:160px;width:1299px;height:33px;background:#323232;"></div>
<div style="left:587px;top:127px;width:2px;height:818px;background:#555555;"></div>
<div style="left:498px;top:127px;width:1390px;height:818px;overflow:hidden;">
<div class="t" style="left:20px;top:9.67px;font-size:20px;line-height:20px;height:20px;color:#606366;font-family:'Liberation Mono', monospace;">1</div>
<div class="t" style="left:99px;top:9.67px;font-size:20px;line-height:20px;height:20px;font-family:'Liberation Mono', monospace;color:#CC7832;">package</div>
<div class="t" style="left:183px;top:9.67px;font-size:20px;line-height:20px;height:20px;font-family:'Liberation Mono', monospace;color:#A9B7C6;"> webubb.model</div>
<div class="t" style="left:339px;top:9.67px;font-size:20px;line-height:20px;height:20px;font-family:'Liberation Mono', monospace;color:#CC7832;">;</div>
<div class="t" style="left:20px;top:42.67px;font-size:20px;line-height:20px;height:20px;color:#A4A3A3;font-family:'Liberation Mono', monospace;">2</div>
<div class="t" style="left:20px;top:75.67px;font-size:20px;line-height:20px;height:20px;color:#606366;font-family:'Liberation Mono', monospace;">3</div>
<div class="t" style="left:99px;top:75.67px;font-size:20px;line-height:20px;height:20px;font-family:'Liberation Mono', monospace;color:#CC7832;">import</div>
<div class="t" style="left:171px;top:75.67px;font-size:20px;line-height:20px;height:20px;font-family:'Liberation Mono', monospace;color:#A9B7C6;"> </div>
<div style="left:183px;top:66px;width:36px;height:33px;background:#3B3B3B;"></div>
<div class="t" style="left:183px;top:75.67px;font-size:20px;line-height:20px;height:20px;font-family:'Liberation Mono', monospace;color:#9C9C9C;">...</div>
<div class="t" style="left:20px;top:108.67px;font-size:20px;line-height:20px;height:20px;color:#606366;font-family:'Liberation Mono', monospace;">8</div>
<div class="t" style="left:20px;top:141.67px;font-size:20px;line-height:20px;height:20px;color:#606366;font-family:'Liberation Mono', monospace;">9</div>
<div class="t" style="left:99px;top:141.67px;font-size:20px;line-height:20px;height:20px;font-family:'Liberation Mono', monospace;color:#629755;font-style:italic;">/**</div>
<div class="t" style="left:8px;top:174.67px;font-size:20px;line-height:20px;height:20px;color:#606366;font-family:'Liberation Mono', monospace;">10</div>
<div class="t" style="left:99px;top:174.67px;font-size:20px;line-height:20px;height:20px;font-family:'Liberation Mono', monospace;color:#629755;font-style:italic;"> * Created by forest.</div>
<div class="t" style="left:8px;top:207.67px;font-size:20px;line-height:20px;height:20px;color:#606366;font-family:'Liberation Mono', monospace;">11</div>
<div class="t" style="left:99px;top:207.67px;font-size:20px;line-height:20px;height:20px;font-family:'Liberation Mono', monospace;color:#629755;font-style:italic;"> */</div>
<div class="t" style="left:99px;top:243.01px;font-size:17px;line-height:17px;height:17px;color:#868686;font-family:'Liberation Sans', sans-serif;transform:scale(1.0,1.06);transform-origin:0 14.39px;">8 usages</div>
<div class="t" style="left:8px;top:273.67px;font-size:20px;line-height:20px;height:20px;color:#606366;font-family:'Liberation Mono', monospace;">12</div>
<div class="t" style="left:99px;top:273.67px;font-size:20px;line-height:20px;height:20px;font-family:'Liberation Mono', monospace;color:#CC7832;">public class</div>
<div class="t" style="left:243px;top:273.67px;font-size:20px;line-height:20px;height:20px;font-family:'Liberation Mono', monospace;color:#A9B7C6;"> DBManager {</div>
<div class="t" style="left:147px;top:309.01px;font-size:17px;line-height:17px;height:17px;color:#868686;font-family:'Liberation Sans', sans-serif;transform:scale(1.0,1.06);transform-origin:0 14.39px;">4 usages</div>
<div class="t" style="left:8px;top:339.67px;font-size:20px;line-height:20px;height:20px;color:#606366;font-family:'Liberation Mono', monospace;">13</div>
<div class="t" style="left:99px;top:339.67px;font-size:20px;line-height:20px;height:20px;font-family:'Liberation Mono', monospace;color:#A9B7C6;">    </div>
<div class="t" style="left:147px;top:339.67px;font-size:20px;line-height:20px;height:20px;font-family:'Liberation Mono', monospace;color:#CC7832;">private</div>
<div class="t" style="left:231px;top:339.67px;font-size:20px;line-height:20px;height:20px;font-family:'Liberation Mono', monospace;color:#A9B7C6;"> Statement </div>
<div class="t" style="left:363px;top:339.67px;font-size:20px;line-height:20px;height:20px;font-family:'Liberation Mono', monospace;color:#9876AA;">stmt</div>
<div class="t" style="left:411px;top:339.67px;font-size:20px;line-height:20px;height:20px;font-family:'Liberation Mono', monospace;color:#CC7832;">;</div>
<div class="t" style="left:8px;top:372.67px;font-size:20px;line-height:20px;height:20px;color:#606366;font-family:'Liberation Mono', monospace;">14</div>
<div class="t" style="left:147px;top:408.01px;font-size:17px;line-height:17px;height:17px;color:#868686;font-family:'Liberation Sans', sans-serif;transform:scale(1.0,1.06);transform-origin:0 14.39px;">3 usages</div>
<div class="t" style="left:8px;top:438.67px;font-size:20px;line-height:20px;height:20px;color:#606366;font-family:'Liberation Mono', monospace;">15</div>
<div class="t" style="left:99px;top:438.67px;font-size:20px;line-height:20px;height:20px;font-family:'Liberation Mono', monospace;color:#A9B7C6;">    </div>
<div class="t" style="left:147px;top:438.67px;font-size:20px;line-height:20px;height:20px;font-family:'Liberation Mono', monospace;color:#CC7832;">public</div>
<div class="t" style="left:219px;top:438.67px;font-size:20px;line-height:20px;height:20px;font-family:'Liberation Mono', monospace;color:#A9B7C6;"> </div>
<div class="t" style="left:231px;top:438.67px;font-size:20px;line-height:20px;height:20px;font-family:'Liberation Mono', monospace;color:#FFC66D;">DBManager</div>
<div class="t" style="left:339px;top:438.67px;font-size:20px;line-height:20px;height:20px;font-family:'Liberation Mono', monospace;color:#A9B7C6;">()</div>
<div style="left:363px;top:429px;width:36px;height:33px;background:#3B3B3B;"></div>
<div class="t" style="left:363px;top:438.67px;font-size:20px;line-height:20px;height:20px;font-family:'Liberation Mono', monospace;color:#9C9C9C;"> { </div>
<div class="t" style="left:399px;top:438.67px;font-size:20px;line-height:20px;height:20px;font-family:'Liberation Mono', monospace;color:#A9B7C6;">connect()</div>
<div class="t" style="left:507px;top:438.67px;font-size:20px;line-height:20px;height:20px;font-family:'Liberation Mono', monospace;color:#CC7832;">;</div>
<div style="left:519px;top:429px;width:24px;height:33px;background:#3B3B3B;"></div>
<div class="t" style="left:519px;top:438.67px;font-size:20px;line-height:20px;height:20px;font-family:'Liberation Mono', monospace;color:#9C9C9C;"> }</div>
<div class="t" style="left:8px;top:471.67px;font-size:20px;line-height:20px;height:20px;color:#606366;font-family:'Liberation Mono', monospace;">18</div>
<div class="t" style="left:147px;top:507.01px;font-size:17px;line-height:17px;height:17px;color:#868686;font-family:'Liberation Sans', sans-serif;transform:scale(1.0,1.06);transform-origin:0 14.39px;">1 usage</div>
<div class="t" style="left:8px;top:537.67px;font-size:20px;line-height:20px;height:20px;color:#606366;font-family:'Liberation Mono', monospace;">19</div>
<div class="t" style="left:99px;top:537.67px;font-size:20px;line-height:20px;height:20px;font-family:'Liberation Mono', monospace;color:#A9B7C6;">    </div>
<div class="t" style="left:147px;top:537.67px;font-size:20px;line-height:20px;height:20px;font-family:'Liberation Mono', monospace;color:#CC7832;">public void</div>
<div class="t" style="left:279px;top:537.67px;font-size:20px;line-height:20px;height:20px;font-family:'Liberation Mono', monospace;color:#A9B7C6;"> </div>
<div class="t" style="left:291px;top:537.67px;font-size:20px;line-height:20px;height:20px;font-family:'Liberation Mono', monospace;color:#FFC66D;">connect</div>
<div class="t" style="left:375px;top:537.67px;font-size:20px;line-height:20px;height:20px;font-family:'Liberation Mono', monospace;color:#A9B7C6;">() {</div>
<div class="t" style="left:8px;top:570.67px;font-size:20px;line-height:20px;height:20px;color:#606366;font-family:'Liberation Mono', monospace;">20</div>
<div class="t" style="left:99px;top:570.67px;font-size:20px;line-height:20px;height:20px;font-family:'Liberation Mono', monospace;color:#A9B7C6;">        </div>
<div class="t" style="left:195px;top:570.67px;font-size:20px;line-height:20px;height:20px;font-family:'Liberation Mono', monospace;color:#CC7832;">try</div>
<div class="t" style="left:231px;top:570.67px;font-size:20px;line-height:20px;height:20px;font-family:'Liberation Mono', monospace;color:#A9B7C6;"> {</div>
<div class="t" style="left:8px;top:603.67px;font-size:20px;line-height:20px;height:20px;color:#606366;font-family:'Liberation Mono', monospace;">21</div>
<div class="t" style="left:99px;top:603.67px;font-size:20px;line-height:20px;height:20px;font-family:'Liberation Mono', monospace;color:#A9B7C6;">            Class.</div>
<div class="t" style="left:315px;top:603.67px;font-size:20px;line-height:20px;height:20px;font-family:'Liberation Mono', monospace;color:#A9B7C6;font-style:italic;">forName</div>
<div class="t" style="left:399px;top:603.67px;font-size:20px;line-height:20px;height:20px;font-family:'Liberation Mono', monospace;color:#A9B7C6;">(</div>
<div style="left:414px;top:598px;width:103px;height:26px;background:#353535;border-radius:5px;"></div>
<div class="t" style="left:422px;top:603.61px;font-size:17px;line-height:17px;height:17px;color:#868686;font-family:'Liberation Sans', sans-serif;transform:scale(1.0,1.06);transform-origin:0 14.39px;">className:</div>
<div class="t" style="left:521px;top:603.67px;font-size:20px;line-height:20px;height:20px;font-family:'Liberation Mono', monospace;color:#6A8759;">&quot;org.gjt.mm.mysql.Driver&quot;</div>
<div class="t" style="left:821px;top:603.67px;font-size:20px;line-height:20px;height:20px;font-family:'Liberation Mono', monospace;color:#A9B7C6;">)</div>
<div class="t" style="left:833px;top:603.67px;font-size:20px;line-height:20px;height:20px;font-family:'Liberation Mono', monospace;color:#CC7832;">;</div>
<div class="t" style="left:8px;top:636.67px;font-size:20px;line-height:20px;height:20px;color:#606366;font-family:'Liberation Mono', monospace;">22</div>
<div class="t" style="left:99px;top:636.67px;font-size:20px;line-height:20px;height:20px;font-family:'Liberation Mono', monospace;color:#A9B7C6;">            Connection con = DriverManager.</div>
<div class="t" style="left:615px;top:636.67px;font-size:20px;line-height:20px;height:20px;font-family:'Liberation Mono', monospace;color:#A9B7C6;font-style:italic;">getConnection</div>
<div class="t" style="left:771px;top:636.67px;font-size:20px;line-height:20px;height:20px;font-family:'Liberation Mono', monospace;color:#A9B7C6;">(</div>
<div style="left:786px;top:631px;width:38px;height:26px;background:#353535;border-radius:5px;"></div>
<div class="t" style="left:794px;top:636.61px;font-size:17px;line-height:17px;height:17px;color:#868686;font-family:'Liberation Sans', sans-serif;transform:scale(1.0,1.06);transform-origin:0 14.39px;">url:</div>
<div class="t" style="left:828px;top:636.67px;font-size:20px;line-height:20px;height:20px;font-family:'Liberation Mono', monospace;color:#6A8759;">&quot;jdbc:mysql://localhost/wp&quot;</div>
<div class="t" style="left:1152px;top:636.67px;font-size:20px;line-height:20px;height:20px;font-family:'Liberation Mono', monospace;color:#CC7832;">,</div>
<div class="t" style="left:1164px;top:636.67px;font-size:20px;line-height:20px;height:20px;font-family:'Liberation Mono', monospace;color:#A9B7C6;"> </div>
<div style="left:1179px;top:631px;width:52px;height:26px;background:#353535;border-radius:5px;"></div>
<div class="t" style="left:1187px;top:636.61px;font-size:17px;line-height:17px;height:17px;color:#868686;font-family:'Liberation Sans', sans-serif;transform:scale(1.0,1.06);transform-origin:0 14.39px;">user:</div>
<div class="t" style="left:1235px;top:636.67px;font-size:20px;line-height:20px;height:20px;font-family:'Liberation Mono', monospace;color:#6A8759;">&quot;root&quot;</div>
<div class="t" style="left:1307px;top:636.67px;font-size:20px;line-height:20px;height:20px;font-family:'Liberation Mono', monospace;color:#CC7832;">,</div>
<div class="t" style="left:1319px;top:636.67px;font-size:20px;line-height:20px;height:20px;font-family:'Liberation Mono', monospace;color:#A9B7C6;"> </div>
<div style="left:1334px;top:631px;width:60px;height:26px;background:#353535;border-radius:5px;"></div>
<div class="t" style="left:1342px;top:636.61px;font-size:17px;line-height:17px;height:17px;color:#868686;font-family:'Liberation Sans', sans-serif;transform:scale(1.0,1.06);transform-origin:0 14.39px;">passw</div>
<div class="t" style="left:8px;top:669.67px;font-size:20px;line-height:20px;height:20px;color:#606366;font-family:'Liberation Mono', monospace;">23</div>
<div class="t" style="left:99px;top:669.67px;font-size:20px;line-height:20px;height:20px;font-family:'Liberation Mono', monospace;color:#A9B7C6;">            </div>
<div class="t" style="left:243px;top:669.67px;font-size:20px;line-height:20px;height:20px;font-family:'Liberation Mono', monospace;color:#9876AA;">stmt</div>
<div class="t" style="left:291px;top:669.67px;font-size:20px;line-height:20px;height:20px;font-family:'Liberation Mono', monospace;color:#A9B7C6;"> = con.createStatement()</div>
<div class="t" style="left:579px;top:669.67px;font-size:20px;line-height:20px;height:20px;font-family:'Liberation Mono', monospace;color:#CC7832;">;</div>
<div class="t" style="left:8px;top:702.67px;font-size:20px;line-height:20px;height:20px;color:#606366;font-family:'Liberation Mono', monospace;">24</div>
<div class="t" style="left:99px;top:702.67px;font-size:20px;line-height:20px;height:20px;font-family:'Liberation Mono', monospace;color:#A9B7C6;">        } </div>
<div class="t" style="left:219px;top:702.67px;font-size:20px;line-height:20px;height:20px;font-family:'Liberation Mono', monospace;color:#CC7832;">catch</div>
<div class="t" style="left:279px;top:702.67px;font-size:20px;line-height:20px;height:20px;font-family:'Liberation Mono', monospace;color:#A9B7C6;">(Exception ex) {</div>
<div class="t" style="left:8px;top:735.67px;font-size:20px;line-height:20px;height:20px;color:#606366;font-family:'Liberation Mono', monospace;">25</div>
<div class="t" style="left:99px;top:735.67px;font-size:20px;line-height:20px;height:20px;font-family:'Liberation Mono', monospace;color:#A9B7C6;">            System.</div>
<div class="t" style="left:327px;top:735.67px;font-size:20px;line-height:20px;height:20px;font-family:'Liberation Mono', monospace;color:#9876AA;font-style:italic;">out</div>
<div class="t" style="left:363px;top:735.67px;font-size:20px;line-height:20px;height:20px;font-family:'Liberation Mono', monospace;color:#A9B7C6;">.println(</div>
<div class="t" style="left:471px;top:735.67px;font-size:20px;line-height:20px;height:20px;font-family:'Liberation Mono', monospace;color:#6A8759;">&quot;</div>
<div class="t" style="left:483px;top:735.67px;font-size:20px;line-height:20px;height:20px;font-family:'Liberation Mono', monospace;color:#6A8759;text-decoration:underline wavy #659C6B;text-underline-offset:3px;text-decoration-thickness:1px;">eroare</div>
<div class="t" style="left:555px;top:735.67px;font-size:20px;line-height:20px;height:20px;font-family:'Liberation Mono', monospace;color:#6A8759;"> la connect:&quot;</div>
<div class="t" style="left:711px;top:735.67px;font-size:20px;line-height:20px;height:20px;font-family:'Liberation Mono', monospace;color:#A9B7C6;">+ex.getMessage())</div>
<div class="t" style="left:915px;top:735.67px;font-size:20px;line-height:20px;height:20px;font-family:'Liberation Mono', monospace;color:#CC7832;">;</div>
<div class="t" style="left:8px;top:768.67px;font-size:20px;line-height:20px;height:20px;color:#606366;font-family:'Liberation Mono', monospace;">26</div>
<div class="t" style="left:99px;top:768.67px;font-size:20px;line-height:20px;height:20px;font-family:'Liberation Mono', monospace;color:#A9B7C6;">            ex.printStackTrace()</div>
<div class="t" style="left:483px;top:768.67px;font-size:20px;line-height:20px;height:20px;font-family:'Liberation Mono', monospace;color:#CC7832;">;</div>
<div class="t" style="left:8px;top:801.67px;font-size:20px;line-height:20px;height:20px;color:#606366;font-family:'Liberation Mono', monospace;">27</div>
<div class="t" style="left:99px;top:801.67px;font-size:20px;line-height:20px;height:20px;font-family:'Liberation Mono', monospace;color:#A9B7C6;">        }</div>
<svg style="left:83px;top:76px;" width="16" height="16" viewBox="0 0 16 16"><rect x="1" y="1" width="14" height="14" fill="#2B2B2B" stroke="#5E5E5E" stroke-width="1.4"/><path d="M4 8 H12 M8 4 V12" stroke="#8C8C8C" stroke-width="1.4"/></svg>
<svg style="left:83px;top:143px;" width="16" height="19" viewBox="0 0 16 19"><path d="M1 1 H15 V11 L8 17.5 L1 11 Z" fill="#2B2B2B" stroke="#5E5E5E" stroke-width="1.4"/><path d="M4.5 6 H11.5" stroke="#8C8C8C" stroke-width="1.4"/></svg>
<svg style="left:83px;top:204px;" width="16" height="19" viewBox="0 0 16 19"><path d="M1 18 H15 V8 L8 1.5 L1 8 Z" fill="#2B2B2B" stroke="#5E5E5E" stroke-width="1.4"/><path d="M4.5 12 H11.5" stroke="#8C8C8C" stroke-width="1.4"/></svg>
<svg style="left:83px;top:439px;" width="16" height="16" viewBox="0 0 16 16"><rect x="1" y="1" width="14" height="14" fill="#2B2B2B" stroke="#5E5E5E" stroke-width="1.4"/><path d="M4 8 H12 M8 4 V12" stroke="#8C8C8C" stroke-width="1.4"/></svg>
<svg style="left:83px;top:538px;" width="16" height="19" viewBox="0 0 16 19"><path d="M1 1 H15 V11 L8 17.5 L1 11 Z" fill="#2B2B2B" stroke="#5E5E5E" stroke-width="1.4"/><path d="M4.5 6 H11.5" stroke="#8C8C8C" stroke-width="1.4"/></svg>
<svg style="left:83px;top:571px;" width="16" height="19" viewBox="0 0 16 19"><path d="M1 1 H15 V11 L8 17.5 L1 11 Z" fill="#2B2B2B" stroke="#5E5E5E" stroke-width="1.4"/><path d="M4.5 6 H11.5" stroke="#8C8C8C" stroke-width="1.4"/></svg>
<svg style="left:83px;top:703px;" width="16" height="19" viewBox="0 0 16 19"><path d="M1 1 H15 V11 L8 17.5 L1 11 Z" fill="#2B2B2B" stroke="#5E5E5E" stroke-width="1.4"/><path d="M4.5 6 H11.5" stroke="#8C8C8C" stroke-width="1.4"/></svg>
<svg style="left:83px;top:800px;" width="16" height="19" viewBox="0 0 16 19"><path d="M1 18 H15 V8 L8 1.5 L1 8 Z" fill="#2B2B2B" stroke="#5E5E5E" stroke-width="1.4"/><path d="M4.5 12 H11.5" stroke="#8C8C8C" stroke-width="1.4"/></svg>
<div style="left:145px;top:561px;width:1px;height:257px;background:#373737;"></div>
<div style="left:193px;top:594px;width:1px;height:99px;background:#373737;"></div>
<div style="left:193px;top:726px;width:1px;height:66px;background:#373737;"></div>
<div style="left:101px;top:805px;width:900px;height:12px;background:rgba(95,95,95,0.6);"></div>
<div style="left:1377px;top:41px;width:12px;height:224px;background:rgba(190,190,190,0.24);"></div>
<div style="left:1370px;top:343px;width:20px;height:3px;background:#BE9117;"></div>
<div style="left:1370px;top:490px;width:20px;height:3px;background:#BE9117;"></div>
<div style="left:1370px;top:674px;width:20px;height:3px;background:#BE9117;"></div>
<div style="left:1370px;top:683.5px;width:20px;height:3px;background:#BE9117;"></div>
<div style="left:1370px;top:719px;width:20px;height:3px;background:#BE9117;"></div>
<div style="left:1217px;top:0px;width:172px;height:35px;background:#2B2B2B;border-radius:0 0 9px 9px;"></div>
<svg style="left:1231px;top:10px;" width="20" height="19" viewBox="0 0 20 19"><path d="M10 0.5 L19.5 18.5 H0.5 Z" fill="#D5A23A"/><rect x="8.8" y="6" width="2.4" height="6.5" fill="#2B2B2B"/><rect x="8.8" y="14" width="2.4" height="2.5" fill="#2B2B2B"/></svg>
<div class="t" style="left:1255.5px;top:14.19px;font-size:17.5px;line-height:17.5px;height:17.5px;color:#BBBBBB;font-family:'Liberation Sans', sans-serif;transform:scale(1.0,1.06);transform-origin:0 14.81px;">16</div>
<svg style="left:1285px;top:11px;" width="20" height="21" viewBox="0 0 20 21"><path d="M2 8 L7.5 13 L17 2.5" fill="none" stroke="#499C54" stroke-width="3.4"/><path d="M1 19 L4 16 L7 19 L10 16 L13 19 L16 16 L19 19" fill="none" stroke="#499C54" stroke-width="1.4"/></svg>
<div class="t" style="left:1309px;top:14.19px;font-size:17.5px;line-height:17.5px;height:17.5px;color:#BBBBBB;font-family:'Liberation Sans', sans-serif;transform:scale(1.0,1.06);transform-origin:0 14.81px;">1</div>
<svg style="left:1334px;top:15px;" width="14" height="9" viewBox="0 0 14 9"><path d="M1 8 L7 2 L13 8" fill="none" stroke="#AFB1B3" stroke-width="1.7"/></svg>
<svg style="left:1366px;top:16px;" width="14" height="9" viewBox="0 0 14 9"><path d="M1 1 L7 7 L13 1" fill="none" stroke="#AFB1B3" stroke-width="1.7"/></svg>
</div>
<div style="left:1888px;top:87px;width:2px;height:858px;background:#2F3133;"></div>
<div style="left:1890px;top:87px;width:30px;height:858px;background:#3C3F41;"></div>
<svg style="left:1896px;top:101px;" width="19" height="20" viewBox="0 0 19 20"><g fill="#AFB1B3"><ellipse cx="9" cy="3.2" rx="8.5" ry="3"/><path d="M0.5 5.5 Q9 10 17.5 5.5 V8 Q9 12.5 0.5 8 Z"/><path d="M0.5 10 Q9 14.5 17.5 10 V12.5 Q9 17 0.5 12.5 Z"/><path d="M0.5 14.5 Q9 19 17.5 14.5 V16.5 Q9 21 0.5 16.5 Z"/></g></svg>
<div class="t" style="left:0;top:0;width:65px;height:15px;line-height:15px;font-size:16.5px;color:#BBBBBB;font-family:'Liberation Sans', sans-serif;transform:translate(1911px,128px) rotate(90deg) scaleX(0.937);transform-origin:0 0;">Database</div>
<svg style="left:1896px;top:813px;" width="22" height="22" viewBox="0 0 22 22"><path d="M9.5 1 C5 1 3 4.5 3 8.5 V13 L1 16 H18 L16 13 V8.5 C16 4.5 14 1 9.5 1 Z" fill="#AFB1B3"/><path d="M7 18 Q9.5 21 12 18 Z" fill="#AFB1B3"/><circle cx="16" cy="5" r="4.2" fill="#3C3F41"/><circle cx="16" cy="5" r="3.3" fill="#3592C4"/></svg>
<div class="t" style="left:0;top:0;width:90px;height:15px;line-height:15px;font-size:16.5px;color:#BBBBBB;font-family:'Liberation Sans', sans-serif;transform:translate(1911px,839px) rotate(90deg) scaleX(1.0);transform-origin:0 0;">Notifications</div>
<div style="left:0px;top:945px;width:1920px;height:1px;background:#2B2B2B;"></div>
<div style="left:0px;top:946px;width:1920px;height:32px;background:#3C3F41;"></div>
<div style="left:0px;top:978px;width:1920px;height:1px;background:#4B4D4F;"></div>
<svg style="left:51px;top:954px;" width="17" height="19" viewBox="0 0 17 19"><circle cx="3.5" cy="3.5" r="2.7" fill="#AFB1B3"/><circle cx="3.5" cy="15.5" r="2.7" fill="#AFB1B3"/><circle cx="13" cy="4.5" r="2.7" fill="#AFB1B3"/><path d="M3.5 3.5 V15.5 M3.5 13 Q3.5 8 13 4.5" stroke="#AFB1B3" stroke-width="2" fill="none"/></svg>
<div class="t" style="left:75px;top:958.71px;font-size:16px;line-height:16px;height:16px;color:#BBBBBB;font-family:'Liberation Sans', sans-serif;transform:scale(1.0,1.06);transform-origin:0 13.54px;">Version Control</div>
<svg style="left:219px;top:956px;" width="18" height="14" viewBox="0 0 18 14"><g fill="#AFB1B3"><rect x="0" y="0" width="3" height="3"/><rect x="5" y="0" width="12" height="3"/><rect x="0" y="5.5" width="3" height="3"/><rect x="5" y="5.5" width="12" height="3"/><rect x="0" y="11" width="3" height="3"/><rect x="5" y="11" width="12" height="3"/></g></svg>
<div class="t" style="left:243.3px;top:958.71px;font-size:16px;line-height:16px;height:16px;color:#BBBBBB;font-family:'Liberation Sans', sans-serif;transform:scale(0.933,1.06);transform-origin:0 13.54px;">TODO</div>
<svg style="left:318px;top:955px;" width="17" height="17" viewBox="0 0 17 17"><circle cx="8.2" cy="8" r="8" fill="#AFB1B3"/><rect x="6.9" y="3" width="2.6" height="6.5" fill="#3C3F41"/><rect x="6.9" y="11" width="2.6" height="2.5" fill="#3C3F41"/></svg>
<div class="t" style="left:342.7px;top:958.71px;font-size:16px;line-height:16px;height:16px;color:#BBBBBB;font-family:'Liberation Sans', sans-serif;transform:scale(1.0,1.06);transform-origin:0 13.54px;">Problems</div>
<svg style="left:439px;top:955px;" width="17" height="16" viewBox="0 0 17 16"><rect x="0" y="0" width="17" height="16" fill="#AFB1B3"/><path d="M3 3.5 L7 7 L3 10.5" stroke="#3C3F41" stroke-width="1.6" fill="none"/><rect x="8" y="11" width="6" height="1.6" fill="#3C3F41"/></svg>
<div class="t" style="left:464.6px;top:958.71px;font-size:16px;line-height:16px;height:16px;color:#BBBBBB;font-family:'Liberation Sans', sans-serif;transform:scale(1.0,1.06);transform-origin:0 13.54px;">Terminal</div>
<svg style="left:555px;top:954px;" width="22" height="20" viewBox="0 0 22 20"><path d="M15 4 A7.5 7.5 0 1 0 8.5 16.5" fill="none" stroke="#AFB1B3" stroke-width="2"/><path d="M8.5 4 V9 L6 11.5" stroke="#AFB1B3" stroke-width="1.5" fill="none"/><path d="M10 8 L21 14 L10 20 Z" fill="#AFB1B3"/></svg>
<div class="t" style="left:583px;top:958.71px;font-size:16px;line-height:16px;height:16px;color:#BBBBBB;font-family:'Liberation Sans', sans-serif;transform:scale(1.0,1.06);transform-origin:0 13.54px;">Profiler</div>
<svg style="left:662px;top:954px;" width="21" height="19" viewBox="0 0 21 19"><path d="M5 0.5 H15.5 L20.5 9.5 L15.5 18.5 H5 L0.5 9.5 Z" fill="#AFB1B3"/><path d="M7.5 5 L14.5 9.5 L7.5 14 Z" fill="#3C3F41"/></svg>
<div class="t" style="left:689.6px;top:958.71px;font-size:16px;line-height:16px;height:16px;color:#BBBBBB;font-family:'Liberation Sans', sans-serif;transform:scale(0.93,1.06);transform-origin:0 13.54px;">Services</div>
<svg style="left:17px;top:985px;" width="21" height="20" viewBox="0 0 21 20"><rect x="5" y="1" width="14" height="13" fill="none" stroke="#AFB1B3" stroke-width="1.6"/><path d="M1.5 5 V18 H15" fill="none" stroke="#AFB1B3" stroke-width="1.6"/></svg>
<div class="t" style="left:60px;top:987.19px;font-size:17.5px;line-height:17.5px;height:17.5px;color:#BBBBBB;font-family:'Liberation Sans', sans-serif;transform:scale(1.025,1.06);transform-origin:0 14.81px;">Microsoft Defender configuration: Project paths were successfully added to the Microsoft Defender exclusion list (today 4:29 PM)</div>
<div class="t" style="left:1638px;top:987.19px;font-size:17.5px;line-height:17.5px;height:17.5px;color:#BBBBBB;font-family:'Liberation Sans', sans-serif;transform:scale(1.0,1.06);transform-origin:0 14.81px;">2:1</div>
<div class="t" style="left:1679.7px;top:987.61px;font-size:17px;line-height:17px;height:17px;color:#BBBBBB;font-family:'Liberation Sans', sans-serif;transform:scale(0.867,1.06);transform-origin:0 14.39px;">CRLF</div>
<div class="t" style="left:1736.6px;top:987.61px;font-size:17px;line-height:17px;height:17px;color:#BBBBBB;font-family:'Liberation Sans', sans-serif;transform:scale(1.0,1.06);transform-origin:0 14.39px;">UTF-8</div>
<div class="t" style="left:1800.5px;top:987.61px;font-size:17px;line-height:17px;height:17px;color:#BBBBBB;font-family:'Liberation Sans', sans-serif;transform:scale(1.0,1.06);transform-origin:0 14.39px;">4 spaces</div>
<svg style="left:1883px;top:985px;" width="19" height="19" viewBox="0 0 19 19"><path d="M3 8 V5 A4.5 4.5 0 0 1 12 5 V6" fill="none" stroke="#AFB1B3" stroke-width="2"/><rect x="5" y="9" width="13" height="10" fill="#AFB1B3"/></svg>
<div style="left:1423px;top:917px;width:253px;height:72px;background:#2C2C2C;border:1px solid #3A3A3A;border-radius:9px;box-sizing:border-box;box-shadow:0 2px 6px rgba(0,0,0,0.35);"></div>
<svg style="left:1448px;top:941px;" width="24" height="24" viewBox="0 0 24 24"><rect x="0" y="0" width="24" height="24" rx="3" fill="#F57C1F"/><rect x="1" y="1" width="22" height="11" rx="2" fill="#FB8A2E"/><path d="M4 7.5 C4 4.5 7 4 9 5.5 C10.5 6.5 11 7 12 7 C13 7 13.5 6.5 15 5.5 C17 4 20 4.5 20 7.5 C20 9.5 18.5 10.5 17.5 12 C18.5 13.5 20 14.5 20 16.5 C20 19.5 17 20 15 18.5 C13.5 17.5 13 17 12 17 C11 17 10.5 17.5 9 18.5 C7 20 4 19.5 4 16.5 C4 14.5 5.5 13.5 6.5 12 C5.5 10.5 4 9.5 4 7.5 Z" fill="#fff"/><ellipse cx="8.3" cy="12" rx="1.6" ry="2.2" fill="#F57C1F"/><ellipse cx="15.7" cy="12" rx="1.6" ry="2.2" fill="#F57C1F"/><circle cx="7.5" cy="7.5" r="1.3" fill="#F57C1F"/><circle cx="16.5" cy="7.5" r="1.3" fill="#F57C1F"/><circle cx="7.5" cy="16.5" r="1.3" fill="#F57C1F"/><circle cx="16.5" cy="16.5" r="1.3" fill="#F57C1F"/></svg>
<svg style="left:1508px;top:941px;" width="24" height="24" viewBox="0 0 24 24"><circle cx="12" cy="12" r="12" fill="#8B1A1A"/><circle cx="12" cy="16.3" r="4" fill="none" stroke="#fff" stroke-width="2.3"/><circle cx="11.6" cy="9.6" r="2.6" fill="none" stroke="#fff" stroke-width="2.1"/><path d="M10.5 7 C9 5 11 3 13 3.5 L15.5 2.5 L14.5 4.5 C13.5 5 12.5 5.5 13 7" fill="none" stroke="#fff" stroke-width="1.6"/><path d="M8.5 18.5 L6 17" stroke="#fff" stroke-width="1.5"/></svg>
<svg style="left:1568px;top:941px;" width="26" height="25" viewBox="0 0 26 25"><path d="M1 3 L11 0 L21 3 V11 C21 17 16 21 11 24 C6 21 1 17 1 11 Z" fill="#1B86DC"/><path d="M1 3 L11 0 V11 H1 Z" fill="#3FC3F5"/><path d="M11 0 L21 3 V11 H11 Z" fill="#2196E8"/><path d="M11 11 H21 C21 17 16 21 11 24 Z" fill="#0E62B5"/><path d="M17.5 12 L25.5 24.5 H9.5 Z" fill="#F9C921" stroke="#2C2C2C" stroke-width="1"/><rect x="16.8" y="15.8" width="1.5" height="5" fill="#1A1A1A"/><rect x="16.8" y="22" width="1.5" height="1.5" fill="#1A1A1A"/></svg>
<svg style="left:1628px;top:941px;" width="24" height="24" viewBox="0 0 24 24"><rect x="0" y="0" width="24" height="24" fill="#5E5E5E"/><rect x="0" y="0" width="12" height="12" fill="#7C7C7C"/><rect x="12" y="0" width="12" height="12" fill="#8A8A8A"/><rect x="12" y="12" width="12" height="12" fill="#6A6A6A"/><text x="12" y="22.5" text-anchor="middle" font-family="Liberation Serif" font-weight="700" font-size="25" fill="#F4F4F4">F</text></svg>
</body></html>
